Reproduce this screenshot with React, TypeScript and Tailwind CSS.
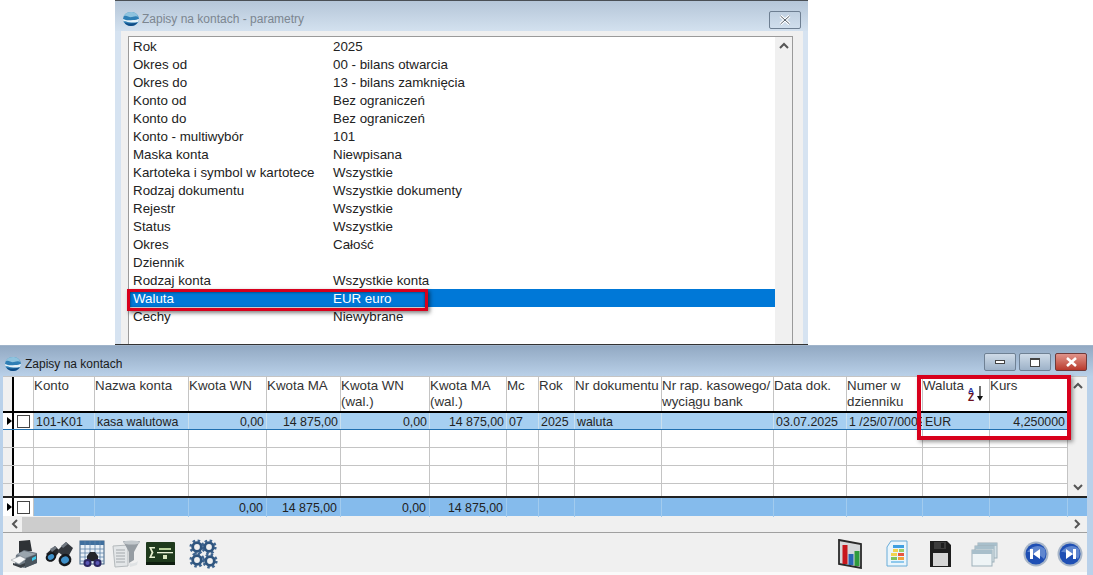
import React from "react";

const params: [string, string][] = [
  ["Rok", "2025"],
  ["Okres od", "00 - bilans otwarcia"],
  ["Okres do", "13 - bilans zamknięcia"],
  ["Konto od", "Bez ograniczeń"],
  ["Konto do", "Bez ograniczeń"],
  ["Konto - multiwybór", "101"],
  ["Maska konta", "Niewpisana"],
  ["Kartoteka i symbol w kartotece", "Wszystkie"],
  ["Rodzaj dokumentu", "Wszystkie dokumenty"],
  ["Rejestr", "Wszystkie"],
  ["Status", "Wszystkie"],
  ["Okres", "Całość"],
  ["Dziennik", ""],
  ["Rodzaj konta", "Wszystkie konta"],
  ["Waluta", "EUR euro"],
  ["Cechy", "Niewybrane"],
];

const GRID =
  "grid grid-cols-[61px_94px_78px_74px_89px_77px_32px_36px_87px_112px_73px_76px_67px_78px]";

const headers: React.ReactNode[] = [
  "Konto",
  "Nazwa konta",
  "Kwota WN",
  "Kwota MA",
  <>Kwota WN<br />(wal.)</>,
  <>Kwota MA<br />(wal.)</>,
  "Mc",
  "Rok",
  "Nr dokumentu",
  <>Nr rap. kasowego/<br />wyciągu bank</>,
  "Data dok.",
  <>Numer w<br />dzienniku</>,
  "Waluta",
  "Kurs",
];

const row: [string, boolean][] = [
  ["101-K01", false],
  ["kasa walutowa", false],
  ["0,00", true],
  ["14 875,00", true],
  ["0,00", true],
  ["14 875,00", true],
  ["07", false],
  ["2025", false],
  ["waluta", false],
  ["", false],
  ["03.07.2025", false],
  ["1 /25/07/0002", false],
  ["EUR", false],
  ["4,250000", true],
];

const foot = ["", "", "0,00", "14 875,00", "0,00", "14 875,00", "", "", "", "", "", "", "", ""];

function Logo() {
  return (
    <svg width="18" height="16" viewBox="0 0 18 16" className="shrink-0">
      <ellipse cx="9" cy="8" rx="8" ry="7" fill="#2f7fb5" />
      <path d="M1.500 5.500C4 3 7 7 10 6s5-1 6.500 0C15 2 12 1 9 1 5 1 2.500 3 1.500 5.500Z" fill="#8fc3de" />
      <path d="M1 8c4 2 7 1 10 1s4-.5 6-1c0 1-.3 2-.8 3-3 .7-6 .6-9 .2C4.500 11 2.500 10 1.500 10.500 1.200 9.500 1 9 1 8Z" fill="#e6f2f8" />
      <path d="M2.500 11.500c3 1.300 8 1.300 13 0C14 14 11.500 15 9 15c-3 0-5.300-1.300-6.500-3.500Z" fill="#0f4c86" />
    </svg>
  );
}

function Chevron({ d }: { d: string }) {
  return (
    <svg width="10" height="10" viewBox="0 0 10 10">
      <path d={d} fill="none" stroke="#555" strokeWidth="2" />
    </svg>
  );
}

function RowMark() {
  return (
    <div className="w-[31px] shrink-0 flex h-full bg-white">
      <div className="w-[11px] flex items-center justify-end border-r-2 border-black">
        <span className="w-0 h-0 border-y-[4px] border-y-transparent border-l-[5px] border-l-black" />
      </div>
      <div className="flex-1 flex items-center justify-center border-r border-[#c4c4c4]">
        <span className="w-[13px] h-[13px] border border-[#444] bg-white" />
      </div>
    </div>
  );
}

function EmptyMark() {
  return (
    <div className="w-[31px] shrink-0 flex h-full">
      <div className="w-[11px] bg-[#f0f0f0] border-r-2 border-black" />
      <div className="flex-1 border-r border-[#c4c4c4]" />
    </div>
  );
}

function SortIcon() {
  return (
    <>
      <span className="absolute left-[45px] top-[10px] text-[8px] font-bold leading-[7px] text-[#1c2f9c]">A</span>
      <span className="absolute left-[45px] top-[16px] text-[10px] font-bold leading-[9px] text-[#6d1020]">Z</span>
      <svg width="6" height="16" viewBox="0 0 6 16" className="absolute left-[54px] top-[9px]">
        <path d="M3 0v11" stroke="#111" strokeWidth="1.200" />
        <path d="M0 10h6l-3 5Z" fill="#111" />
      </svg>
    </>
  );
}

function IconPrinter() {
  return (
    <svg width="30" height="30" viewBox="0 0 30 30">
      <path d="M9 2l11-1 2 11-13 2Z" fill="#2e3236" />
      <path d="M6 16l8-5 13 3v10l-13 5-9-4Z" fill="#6d7883" />
      <path d="M7 15l7-3 12 3-11 4Z" fill="#9aa5ae" />
      <path d="M15 20v9l12-5V15Z" fill="#4a545d" />
      <path d="M1 21l9-4 6 3-7 5Z" fill="#f6f7f8" stroke="#8a9299" strokeWidth="0.500" />
      <path d="M3 24l7 2 5-2v3l-4 2-8-3Z" fill="#3a4046" />
      <path d="M22 19l4-2v3l-4 2Z" fill="#3cc8ea" />
    </svg>
  );
}

function IconBinoculars() {
  return (
    <svg width="30" height="30" viewBox="0 0 30 30">
      <path d="M2 15l9-8 5 5-7 9Z" fill="#26292e" />
      <path d="M13 12l9-9 7 6-6 11Z" fill="#33373d" />
      <path d="M6 10l5-3 2 2-5 4Z" fill="#6f7780" />
      <path d="M17 7l5-4 2 2-5 4Z" fill="#6f7780" />
      <ellipse cx="7" cy="18" rx="5.500" ry="4.500" transform="rotate(-30 7 18)" fill="#16181c" />
      <ellipse cx="7" cy="18" rx="3.300" ry="2.600" transform="rotate(-30 7 18)" fill="#3e90c9" />
      <ellipse cx="21" cy="21" rx="6.500" ry="6" transform="rotate(-30 21 21)" fill="#16181c" />
      <ellipse cx="21" cy="21" rx="4" ry="3.500" transform="rotate(-30 21 21)" fill="#3e90c9" />
    </svg>
  );
}

function IconTable() {
  return (
    <svg width="27" height="28" viewBox="0 0 27 28">
      <rect x="1" y="1" width="24" height="23" fill="#eaf1f7" stroke="#3d5e80" />
      <rect x="1" y="1" width="24" height="4" fill="#3f6f9e" />
      <path d="M1 9h24M1 13h24M1 17h24M1 21h24M6 1v23M11 1v23M16 1v23M21 1v23" stroke="#5e84a8" strokeWidth="0.800" />
      <path d="M8 16l3-4h5l3 4v5H8Z" fill="#23262c" />
      <ellipse cx="8.500" cy="23" rx="4" ry="4" fill="#2b2560" />
      <ellipse cx="18.500" cy="23" rx="4" ry="4" fill="#2b2560" />
      <ellipse cx="8.500" cy="23" rx="2" ry="2" fill="#5a57b5" />
      <ellipse cx="18.500" cy="23" rx="2" ry="2" fill="#5a57b5" />
    </svg>
  );
}

function IconFunnel() {
  return (
    <svg width="29" height="28" viewBox="0 0 29 28">
      <path d="M1 6l15-1v21l-13 1Z" fill="#e3e6e8" stroke="#b5babd" />
      <path d="M4 10h9M4 13h9M4 16h9M4 19h9M4 22h9" stroke="#a3a8ac" strokeWidth="1.200" />
      <path d="M11 1h17l-6 11v8l-5 3V12Z" fill="#969da3" />
      <ellipse cx="19.500" cy="2.500" rx="8.500" ry="2" fill="#c3c9cd" />
      <path d="M17 23c3 1 7 0 9-2l-1 4-7 2Z" fill="#dfe2e4" />
    </svg>
  );
}

function IconSigma() {
  return (
    <svg width="29" height="24" viewBox="0 0 29 24">
      <rect width="29" height="23" rx="1" fill="#1f3a1d" />
      <rect y="20" width="29" height="3" fill="#0f1e10" />
      <path d="M3 5h6v1.500H5.500l2 4-2 4H9V16H3l2.500-5.500Z" fill="#e5efcf" />
      <rect x="11" y="10" width="16" height="1.300" fill="#e9f1d8" />
      <rect x="13" y="6" width="12" height="2" fill="#b8d19c" />
      <rect x="17" y="13" width="4" height="4" fill="#d7e5bf" />
    </svg>
  );
}

function Gear({ cx, cy }: { cx: number; cy: number }) {
  return (
    <g>
      <circle cx={cx} cy={cy} r="6.400" fill="none" stroke="#3f6590" strokeWidth="2.400" strokeDasharray="2.500 2.500" />
      <circle cx={cx} cy={cy} r="4.300" fill="none" stroke="#2f557f" strokeWidth="2.800" />
    </g>
  );
}

function IconGears() {
  return (
    <svg width="29" height="30" viewBox="0 0 29 30">
      <Gear cx={8} cy={8} />
      <Gear cx={20} cy={8} />
      <Gear cx={8} cy={21} />
      <Gear cx={21} cy={22} />
    </svg>
  );
}

function IconChart() {
  return (
    <svg width="26" height="30" viewBox="0 0 26 30">
      <path d="M1 1l22 4v24L1 25Z" fill="#d6d8da" stroke="#2a2a2a" strokeWidth="1.800" />
      <rect x="4.500" y="6" width="5" height="19" fill="#c8171d" />
      <rect x="10.500" y="15" width="5" height="11" fill="#2967b5" />
      <rect x="16.500" y="12" width="5" height="15" fill="#2f9a3d" />
    </svg>
  );
}

function IconSheet() {
  return (
    <svg width="22" height="28" viewBox="0 0 22 28">
      <path d="M5 1h16v25H1V7Z" fill="#e9f5fc" stroke="#69acd8" />
      <rect x="7" y="5" width="11" height="3" fill="#3f9fe0" />
      <rect x="7" y="9" width="5" height="3" fill="#f1d34f" />
      <rect x="13" y="9" width="5" height="3" fill="#9bd06a" />
      <rect x="5" y="13" width="6" height="3" fill="#f1d34f" />
      <rect x="12" y="13" width="6" height="3" fill="#e8563f" />
      <rect x="5" y="17" width="6" height="3" fill="#7fc25b" />
      <rect x="12" y="17" width="6" height="3" fill="#f0a23c" />
      <rect x="5" y="21" width="13" height="2" fill="#8ec8ec" />
    </svg>
  );
}

function IconFloppy() {
  return (
    <svg width="23" height="28" viewBox="0 0 23 28">
      <path d="M1 1h17l4 4v22H1Z" fill="#1e1e1e" />
      <rect x="5" y="2" width="12" height="7" fill="#3c3c3c" />
      <rect x="12" y="3" width="3" height="5" fill="#1e1e1e" />
      <rect x="4" y="13" width="15" height="13" fill="#d6d6d6" />
    </svg>
  );
}

function IconWindows() {
  return (
    <svg width="27" height="25" viewBox="0 0 27 25">
      <rect x="7" y="1" width="19" height="15" fill="#d5e2e8" stroke="#9db0ba" />
      <rect x="7" y="1" width="19" height="3" fill="#a8bfcb" />
      <rect x="4" y="4" width="19" height="16" fill="#dde8ec" stroke="#9db0ba" />
      <rect x="4" y="4" width="19" height="3" fill="#a8bfcb" />
      <rect x="1" y="8" width="20" height="16" fill="#eef4f6" stroke="#9db0ba" />
      <rect x="1" y="8" width="20" height="4" fill="#a8bfcb" />
    </svg>
  );
}

function NavBtn({ next }: { next?: boolean }) {
  return (
    <svg width="26" height="26" viewBox="0 0 26 26">
      <circle cx="13" cy="13" r="12.500" fill="#a8b6c8" />
      <circle cx="13" cy="13" r="10.500" fill="#1f4fb4" />
      <path d="M4 11c5-7 13-8 18-3 1 3 1 7-1 10-5-5-11-7-17-7Z" fill="#5f86cf" />
      {next ? (
        <path d="M9 8l7 5-7 5ZM16 8h3v10h-3Z" fill="#fff" />
      ) : (
        <path d="M17 8l-7 5 7 5ZM7 8h3v10H7Z" fill="#fff" />
      )}
    </svg>
  );
}

function WinBtn({ children, red }: { children: React.ReactNode; red?: boolean }) {
  return (
    <div
      className={`h-[18px] flex items-center justify-center rounded-[2px] border ${
        red
          ? "w-[32px] ml-[1px] border-[#6f3a3a] bg-gradient-to-b from-[#e0938a] to-[#b8382c]"
          : "w-[32px] mr-[3px] border-[#6f8194] bg-gradient-to-b from-[#cfdbe8] to-[#9db2c8]"
      }`}
    >
      {children}
    </div>
  );
}

export default function App() {
  return (
    <div className="relative w-[1093px] h-[575px] overflow-hidden bg-white flex flex-col [font-family:Liberation_Sans,Arial,sans-serif] text-[13.33px] text-[#222]">
      {/* Dialog */}
      <div className="h-[345px] shrink-0 pl-[115px]">
        <div className="w-[693px] h-full bg-[#d6e3f1] border-t border-[#4a4f55] flex flex-col">
          <div className="h-[30px] shrink-0 bg-gradient-to-b from-[#b5c6d8] to-[#d3e1ef] flex items-center pt-[6px] pl-[7px] gap-[2px]">
            <Logo />
            <span className="text-[#7c8690] text-[12px]">Zapisy na kontach - parametry</span>
            <div className="ml-auto mr-[7px] mt-[1px] w-[32px] h-[18px] border border-[#6e7f92] rounded-[2px] flex items-center justify-center">
              <svg width="12" height="10" viewBox="0 0 12 10">
                <path d="M1.500 1l9 8M10.500 1l-9 8" stroke="#fff" strokeWidth="3" />
                <path d="M1.500 1l9 8M10.500 1l-9 8" stroke="#55606b" strokeWidth="1" />
              </svg>
            </div>
          </div>
          <div className="flex-1 ml-[6px] mr-[5px] bg-[#f0f0f0] pt-[5px] px-[7px] min-h-0">
            <div className="h-full border border-[#9a9a9a] border-b-0 bg-white flex w-[665px]">
              <div className="flex-1 flex flex-col">
                {params.map(([a, b], i) => (
                  <div
                    key={a}
                    className={`h-[18px] shrink-0 flex items-center leading-[18px] pt-[2px] ${
                      i === 14 ? "bg-[#0078d7] text-white" : ""
                    }`}
                  >
                    <span className="w-[204px] pl-[4px] shrink-0 whitespace-nowrap">{a}</span>
                    <span className="whitespace-nowrap">{b}</span>
                  </div>
                ))}
              </div>
              <div className="w-[17px] shrink-0 bg-[#f0f0f0] flex justify-center pt-[4px]">
                <Chevron d="M1 7l4-4 4 4" />
              </div>
            </div>
          </div>
          <div className="h-[1px] shrink-0 bg-[#333]" />
        </div>
      </div>

      {/* Main window */}
      <div className="flex-1 min-h-0 flex flex-col bg-[#b9d1ea] border-t border-[#a0b4ca]">
        <div className="h-[30px] shrink-0 bg-gradient-to-b from-[#92a9c3] to-[#b9d0e8] flex items-center pt-[6px] pl-[4px] pr-[6px] gap-[3px]">
          <Logo />
          <span className="text-[#1a1a1a] text-[12px]">Zapisy na kontach</span>
          <div className="ml-auto flex -mt-[4px]">
            <WinBtn><span className="w-[10px] h-[4px] border border-[#444] bg-white" /></WinBtn>
            <WinBtn><span className="w-[10px] h-[9px] border border-[#444] border-t-2 bg-white" /></WinBtn>
            <WinBtn red>
              <svg width="13" height="10" viewBox="0 0 13 10">
                <path d="M2 1l9 8M11 1l-9 8" stroke="#fff" strokeWidth="2.600" />
              </svg>
            </WinBtn>
          </div>
        </div>

        <div className="flex-1 min-h-0 ml-[3px] mr-[6px] bg-[#f0f0f0] flex flex-col">
          {/* Table */}
          <div className="flex bg-white border-t border-[#c4c4c4] h-[140px] shrink-0">
            <div className="w-[1065px] shrink-0 flex flex-col">
              <div className="h-[34px] shrink-0 flex">
                <EmptyMark />
                <div className={`${GRID} flex-1`}>
                  {headers.map((h, i) => (
                    <div key={i} className="relative border-r border-[#c4c4c4] pt-[1px] leading-[16px] whitespace-nowrap overflow-hidden text-[#333]">
                      {h}
                      {i === 12 && <SortIcon />}
                    </div>
                  ))}
                </div>
              </div>
              <div className="h-[19px] shrink-0 flex bg-[#a6cff1] border-t-2 border-black border-b border-b-[#1f6fb0]">
                <RowMark />
                <div className={`${GRID} flex-1`}>
                  {row.map(([t, right], i) => (
                    <div
                      key={i}
                      className={`border-r border-[#c9dfee] text-[12.4px] pt-[1px] leading-[16px] pl-[2px] pr-[2px] whitespace-nowrap overflow-hidden ${right ? "text-right" : ""}`}
                    >
                      {t}
                    </div>
                  ))}
                </div>
              </div>
              {[0, 1, 2].map((r) => (
                <div key={r} className="h-[18px] shrink-0 flex border-b border-[#c4c4c4]">
                  <EmptyMark />
                  <div className={`${GRID} flex-1`}>
                    {row.map((_, i) => (
                      <div key={i} className="border-r border-[#c4c4c4]" />
                    ))}
                  </div>
                </div>
              ))}
              <div className="h-[12px] shrink-0 flex">
                <EmptyMark />
                <div className={`${GRID} flex-1`}>
                  {row.map((_, i) => (
                    <div key={i} className="border-r border-[#c4c4c4]" />
                  ))}
                </div>
              </div>
              <div className="h-[2px] shrink-0 bg-[#222]" />
              <div className="h-[18px] shrink-0 flex bg-[#85bbec]">
                <RowMark />
                <div className={`${GRID} flex-1`}>
                  {foot.map((t, i) => (
                    <div key={i} className="border-r border-[#a2cbee] text-[12.4px] text-right pt-[1px] leading-[18px] pr-[3px] whitespace-nowrap">
                      {t}
                    </div>
                  ))}
                </div>
              </div>
            </div>
            <div className="flex-1 flex flex-col items-center bg-[#f0f0f0] pt-[4px]">
              <Chevron d="M1 7l4-4 4 4" />
              <div className="mt-[91px]">
                <Chevron d="M1 3l4 4 4-4" />
              </div>
              <div className="flex-1 w-full mt-[4px] bg-[#85bbec] border-t-2 border-[#222]" />
            </div>
          </div>

          {/* Horizontal scrollbar */}
          <div className="h-[17px] shrink-0 flex items-center border-b border-[#a0a0a0] pl-[7px] pr-[5px]">
            <Chevron d="M7 1L3 5l4 4" />
            <div className="ml-[2px] w-[58px] h-[15px] bg-[#cdcdcd]" />
            <div className="ml-auto">
              <Chevron d="M3 1l4 4-4 4" />
            </div>
          </div>

          {/* Toolbar */}
          <div className="flex-1 min-h-0 flex items-start pt-[6px] pl-[7px] pr-[4px]">
            <div className="flex items-center">
              <IconPrinter />
              <div className="ml-[4px] flex"><IconBinoculars /></div>
              <div className="ml-[5px] flex"><IconTable /></div>
              <div className="ml-[6px] flex"><IconFunnel /></div>
              <div className="ml-[5px] flex"><IconSigma /></div>
              <div className="ml-[14px] flex"><IconGears /></div>
            </div>
            <div className="ml-auto flex items-center">
              <IconChart />
              <div className="ml-[22px] flex"><IconSheet /></div>
              <div className="ml-[21px] flex"><IconFloppy /></div>
              <div className="ml-[19px] flex"><IconWindows /></div>
              <div className="ml-[25px] flex"><NavBtn /></div>
              <div className="ml-[8px] flex"><NavBtn next /></div>
            </div>
          </div>
          <div className="h-[3px] shrink-0 bg-[#fafafa]" />
        </div>
      </div>

      {/* Red annotations */}
      <div className="absolute left-[127px] top-[289px] w-[301px] h-[22px] border-[3px] border-[#d8001c] shadow-[2px_2px_4px_rgba(0,0,0,0.5),inset_0_0_3px_rgba(0,0,0,0.6)]" />
      <div className="absolute left-[917px] top-[375px] w-[154px] h-[65px] border-[4px] border-[#d8001c] shadow-[2px_2px_4px_rgba(0,0,0,0.4)]" />
    </div>
  );
}
